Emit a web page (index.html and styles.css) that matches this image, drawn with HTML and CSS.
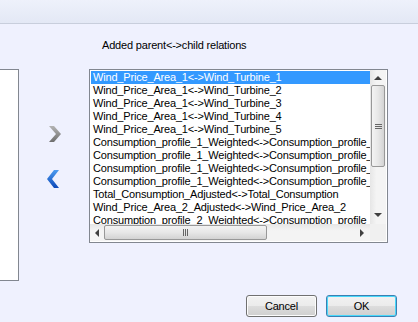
FILE: index.html
```html
<!DOCTYPE html>
<html lang="en">
<head>
  <meta charset="UTF-8" />
  <title>Relations</title>
  <link rel="stylesheet" href="styles.css">
</head>
<body>
  <div class="dialog">
    <div class="header"></div>

    <div class="content">
      <!-- left list (cut off) -->
      <div class="left-box"></div>

      <!-- move buttons -->
      <div class="movers">
        <svg class="mover" width="16" height="20" viewBox="0 0 16 20">
          <defs>
            <linearGradient id="grayGrad" x1="0" y1="0" x2="0" y2="1">
              <stop offset="0" stop-color="#b4b4b4"/>
              <stop offset="1" stop-color="#6e6e6e"/>
            </linearGradient>
          </defs>
          <path d="M3 2 L8 2 L15 10 L8 18 L3 18 L10 10 Z" fill="url(#grayGrad)"/>
        </svg>
        <svg class="mover" width="16" height="20" viewBox="0 0 16 20">
          <defs>
            <linearGradient id="blueGrad" x1="0" y1="0" x2="0" y2="1">
              <stop offset="0" stop-color="#4d9cf0"/>
              <stop offset="1" stop-color="#0b47b8"/>
            </linearGradient>
          </defs>
          <path d="M13 1 L8 1 L1 10 L8 19 L13 19 L6 10 Z" fill="url(#blueGrad)"/>
        </svg>
      </div>

      <!-- added relations -->
      <div class="relations">
        <div class="label">Added parent&lt;-&gt;child relations</div>
        <div class="listbox">
          <ul class="items">
            <li class="selected">Wind_Price_Area_1&lt;-&gt;Wind_Turbine_1</li>
            <li>Wind_Price_Area_1&lt;-&gt;Wind_Turbine_2</li>
            <li>Wind_Price_Area_1&lt;-&gt;Wind_Turbine_3</li>
            <li>Wind_Price_Area_1&lt;-&gt;Wind_Turbine_4</li>
            <li>Wind_Price_Area_1&lt;-&gt;Wind_Turbine_5</li>
            <li>Consumption_profile_1_Weighted&lt;-&gt;Consumption_profile_1_A</li>
            <li>Consumption_profile_1_Weighted&lt;-&gt;Consumption_profile_1_B</li>
            <li>Consumption_profile_1_Weighted&lt;-&gt;Consumption_profile_1_C</li>
            <li>Consumption_profile_1_Weighted&lt;-&gt;Consumption_profile_1_D</li>
            <li>Total_Consumption_Adjusted&lt;-&gt;Total_Consumption</li>
            <li>Wind_Price_Area_2_Adjusted&lt;-&gt;Wind_Price_Area_2</li>
            <li>Consumption_profile_2_Weighted&lt;-&gt;Consumption_profile_2_A</li>
          </ul>

          <div class="vscroll">
            <span class="arrow up"></span>
            <div class="vthumb"><span class="grip-h"></span></div>
            <span class="arrow down"></span>
          </div>

          <div class="hscroll">
            <span class="arrow left"></span>
            <div class="hthumb"><span class="grip-v"></span></div>
            <span class="arrow right"></span>
          </div>

          <div class="corner"></div>
        </div>
      </div>
    </div>

    <div class="footer">
      <button class="btn">Cancel</button>
      <button class="btn default">OK</button>
    </div>
  </div>
</body>
</html>
```

FILE: styles.css
```css
body {
  margin: 0;
  font-family: 'Liberation Sans', Arial, sans-serif;
  font-size: 11px;
  letter-spacing: -0.18px;
  color: #000;
  background: #eff1fe;
}

.dialog {
  width: 418px;
  height: 322px;
  display: flex;
  flex-direction: column;
  overflow: hidden;
}

.header {
  height: 23px;
  flex-shrink: 0;
  background: linear-gradient(#eef1fb, #e3e8f5);
  border-bottom: 1px solid #c8cedc;
}

.content {
  display: flex;
  height: 256px;
}

.left-box {
  width: 18px;
  height: 210px;
  margin-top: 45px;
  background: #fff;
  border: 1px solid #828790;
  border-left: none;
}

.movers {
  width: 70px;
  display: flex;
  flex-direction: column;
  align-items: center;
  padding-top: 100px;
  gap: 25px;
}

.mover {
  display: block;
  margin-left: -1px;
}

.relations {
  display: flex;
  flex-direction: column;
}

.label {
  padding: 15px 0 0 13px;
  line-height: 13px;
  height: 30px;
}

.listbox {
  width: 296px;
  height: 171px;
  border: 1px solid #828790;
  background: #fff;
  padding: 1px 0 0 1px;
  display: grid;
  grid-template-columns: 279px 16px;
  grid-template-rows: 153px 17px;
}

.items {
  list-style: none;
  margin: 0;
  padding: 0;
  overflow: hidden;
}

.items li {
  height: 13px;
  line-height: 13px;
  padding-left: 2px;
  white-space: nowrap;
  overflow: hidden;
}

.items li.selected {
  background: #3399ff;
  color: #fff;
}

.vscroll {
  grid-row: 1;
  grid-column: 2;
  background: linear-gradient(90deg, #e6e6e6, #f4f4f4 40%, #f4f4f4);
  display: flex;
  flex-direction: column;
  align-items: center;
  margin-top: -1px;
}

.hscroll {
  grid-row: 2;
  grid-column: 1;
  background: linear-gradient(#e6e6e6, #f4f4f4 40%, #f4f4f4);
  display: flex;
  align-items: center;
  margin-left: -1px;
}

.corner {
  grid-row: 2;
  grid-column: 2;
  background: #f0f0f0;
}

.arrow {
  width: 0;
  height: 0;
  flex-shrink: 0;
  border: 4px solid transparent;
}

.arrow.up {
  border-bottom-color: #404040;
  border-top-width: 0;
  margin: 6px 0 5px;
}

.arrow.down {
  border-top-color: #404040;
  border-bottom-width: 0;
  margin: auto 0 7px;
}

.arrow.left {
  border-right-color: #404040;
  border-left-width: 0;
  margin: 0 5px 0 5px;
}

.arrow.right {
  border-left-color: #404040;
  border-right-width: 0;
  margin: 0 6px 0 auto;
}

.vthumb {
  width: 14px;
  height: 82px;
  box-sizing: border-box;
  border: 1px solid #989898;
  border-radius: 2px;
  background: linear-gradient(90deg, #f3f3f3, #e7e7e7 50%, #d3d3d3);
  display: flex;
  align-items: center;
  justify-content: center;
}

.hthumb {
  width: 163px;
  height: 15px;
  box-sizing: border-box;
  border: 1px solid #989898;
  border-radius: 2px;
  background: linear-gradient(#f3f3f3, #e7e7e7 50%, #d3d3d3);
  display: flex;
  align-items: center;
  justify-content: center;
}

.grip-h {
  width: 7px;
  height: 1px;
  background: #666;
  box-shadow: 0 2px 0 #666, 0 4px 0 #666;
  margin-top: -4px;
}

.grip-v {
  width: 1px;
  height: 7px;
  background: #666;
  box-shadow: 2px 0 0 #666, 4px 0 0 #666;
  margin-left: -4px;
}

.footer {
  display: flex;
  justify-content: flex-end;
  gap: 9px;
  padding: 15px 21px 0 0;
}

.btn {
  width: 71px;
  height: 22px;
  font-family: 'Liberation Sans', Arial, sans-serif;
  font-size: 11px;
  letter-spacing: -0.18px;
  color: #000;
  border: 1px solid #707070;
  border-radius: 3px;
  background: linear-gradient(#f2f2f2, #ebebeb 50%, #dddddd 50%, #cfcfcf);
  box-shadow: inset 0 0 0 1px #fcfcfc;
  padding: 0;
}

.btn.default {
  border-color: #3c7fb1;
  box-shadow: inset 0 0 0 1px #48d8fb;
}
```
